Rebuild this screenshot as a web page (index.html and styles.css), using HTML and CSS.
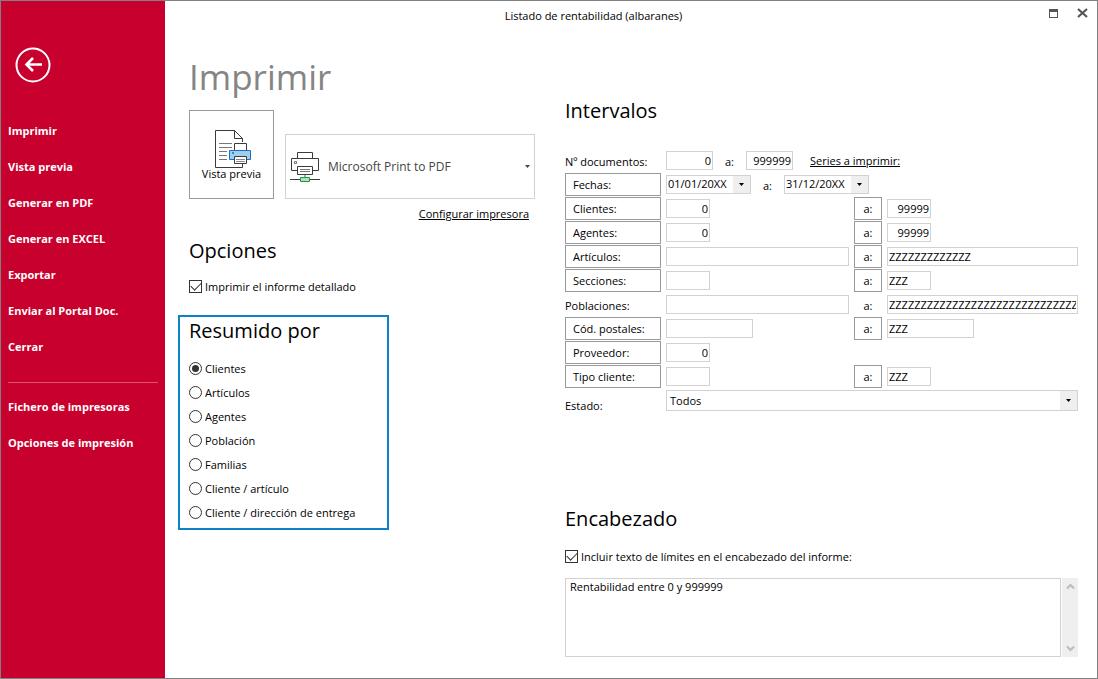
FILE: index.html
```html
<!DOCTYPE html>
<html lang="es">
<head>
<meta charset="utf-8">
<meta name="viewport" content="width=device-width, initial-scale=1">
<title>Listado de rentabilidad (albaranes)</title>
<link rel="stylesheet" href="styles.css">
</head>
<body>
<div class="window">
  <nav class="sidebar">
    <button class="back" type="button" aria-label="Volver">
      <svg width="36" height="36" viewBox="0 0 36 36" fill="none" stroke="#fff" stroke-width="2"><circle cx="18" cy="18" r="16.5"/><path d="M27 17.500H11M18 11l-6.500 6.500L18 24" stroke-width="2.600"/></svg>
    </button>
    <a class="nav-item" href="#imprimir">Imprimir</a>
    <a class="nav-item" href="#vista">Vista previa</a>
    <a class="nav-item" href="#pdf">Generar en PDF</a>
    <a class="nav-item" href="#excel">Generar en EXCEL</a>
    <a class="nav-item" href="#exportar">Exportar</a>
    <a class="nav-item" href="#portal">Enviar al Portal Doc.</a>
    <a class="nav-item" href="#cerrar">Cerrar</a>
    <hr class="nav-rule">
    <a class="nav-item" href="#fichero">Fichero de impresoras</a>
    <a class="nav-item" href="#opciones">Opciones de impresión</a>
  </nav>

  <div class="body">
    <header class="titlebar">
      <div class="title">Listado de rentabilidad (albaranes)</div>
      <div class="controls">
        <button class="control" type="button" aria-label="Maximizar"><svg width="11" height="11" viewBox="0 0 11 11" shape-rendering="crispEdges"><path d="M1 1h9v9H1zM2 4v5h7V4z" fill="#555" fill-rule="evenodd"/></svg></button>
        <button class="control" type="button" aria-label="Cerrar ventana"><svg width="11" height="11" viewBox="0 0 11 11"><path d="M1 1l9 8M10 1l-9 8" stroke="#555" stroke-width="2.200"/></svg></button>
      </div>
    </header>

    <main class="content">
      <section class="left">
        <h1>Imprimir</h1>
        <div class="print-row">
          <button class="preview" type="button">
            <svg width="39" height="38" viewBox="-2 1 39 38" fill="none" stroke="#3b3b3b">
              <path d="M28.500 13v-3.500l-8-8H1.500v37h27v-5" fill="#fff"/>
              <path d="M20.500 1.500v8h8z" fill="#fff"/>
              <path d="M5 14.500h13M5 18.500h13M5 22.500h8M5 26.500h8M5 30.500h8" stroke="#777"/>
              <path d="M20.500 21.500v-7h12v7" fill="#fff"/>
              <path d="M15.500 21.500h21v9h-21z" fill="#a0cdf2" stroke="#1c6fb8"/>
              <path d="M18.500 23.500h1v1h-1z" stroke="#1c6fb8"/>
              <path d="M20.500 27.500h12v7h-12z" fill="#fff"/>
              <path d="M22 30.500h9M22 32.500h9" stroke="#888"/>
            </svg>
            <span>Vista previa</span>
          </button>
          <div class="printer">
            <select class="printer-select" aria-label="Impresora"><option>Microsoft Print to PDF</option></select>
            <svg class="printer-icon" width="30" height="32" viewBox="0 0 30 32" fill="none" stroke="#3b3b3b">
              <path d="M7.500 7.500v-6h15v6" fill="#fff"/>
              <path d="M1.500 7.500h27v12h-27z" fill="#fff"/>
              <path d="M4.500 10.500h2v2h-2z" stroke="#777"/>
              <path d="M15 23v3" stroke="#aaa" stroke-width="2"/>
              <path d="M7.500 15.500h15v8h-15z" fill="#fff"/>
              <path d="M10 18.500h10M10 20.500h10" stroke="#777"/>
              <path d="M0 28.500h30"/>
              <path d="M10.500 26.500h9v4h-9z" fill="#b5e0bf" stroke="#1c9a45"/>
            </svg>
            <svg class="caret" width="5" height="3" viewBox="0 0 5 3"><path d="M0 0h5L2.500 3z" fill="#444"/></svg>
          </div>
        </div>
        <a class="config" href="#configurar">Configurar impresora</a>

        <h2>Opciones</h2>
        <label class="check"><input type="checkbox" checked>Imprimir el informe detallado</label>

        <div class="summary" role="radiogroup" aria-labelledby="resumido">
          <h2 id="resumido">Resumido por</h2>
          <label class="radio"><input type="radio" name="resumen" checked>Clientes</label>
          <label class="radio"><input type="radio" name="resumen">Artículos</label>
          <label class="radio"><input type="radio" name="resumen">Agentes</label>
          <label class="radio"><input type="radio" name="resumen">Población</label>
          <label class="radio"><input type="radio" name="resumen">Familias</label>
          <label class="radio"><input type="radio" name="resumen">Cliente / artículo</label>
          <label class="radio"><input type="radio" name="resumen">Cliente / dirección de entrega</label>
        </div>
      </section>

      <section class="right">
        <h2>Intervalos</h2>
        <div class="ranges">
          <label class="text-label" for="doc1">Nº documentos:</label>
          <div class="inline-fields">
            <input class="field short num" id="doc1" value="0">
            <label class="text-label" for="doc2">a:</label>
            <input class="field short num" id="doc2" value="999999">
            <a class="series" href="#series">Series a imprimir:</a>
          </div>

          <button class="lookup" type="button">Fechas:</button>
          <div class="inline-fields">
            <div class="combo date">
              <select aria-label="Fecha inicial"><option>01/01/20XX</option></select>
              <span class="drop"><svg width="5" height="3" viewBox="0 0 5 3"><path d="M0 0h5L2.500 3z"/></svg></span>
            </div>
            <label class="text-label" for="fecha2">a:</label>
            <div class="combo date">
              <select id="fecha2"><option>31/12/20XX</option></select>
              <span class="drop"><svg width="5" height="3" viewBox="0 0 5 3"><path d="M0 0h5L2.500 3z"/></svg></span>
            </div>
          </div>

          <button class="lookup" type="button">Clientes:</button>
          <input class="field small num" aria-label="Clientes desde" value="0">
          <button class="lookup to" type="button">a:</button>
          <input class="field small num" aria-label="Clientes hasta" value="99999">

          <button class="lookup" type="button">Agentes:</button>
          <input class="field small num" aria-label="Agentes desde" value="0">
          <button class="lookup to" type="button">a:</button>
          <input class="field small num" aria-label="Agentes hasta" value="99999">

          <button class="lookup" type="button">Artículos:</button>
          <input class="field" aria-label="Artículos desde">
          <button class="lookup to" type="button">a:</button>
          <input class="field" aria-label="Artículos hasta" value="ZZZZZZZZZZZZZ">

          <button class="lookup" type="button">Secciones:</button>
          <input class="field small" aria-label="Secciones desde">
          <button class="lookup to" type="button">a:</button>
          <input class="field small" aria-label="Secciones hasta" value="ZZZ">

          <label class="text-label" for="pob1">Poblaciones:</label>
          <input class="field" id="pob1">
          <label class="text-label to-label" for="pob2">a:</label>
          <input class="field" id="pob2" value="ZZZZZZZZZZZZZZZZZZZZZZZZZZZZZZZ">

          <button class="lookup" type="button">Cód. postales:</button>
          <input class="field medium" aria-label="Códigos postales desde">
          <button class="lookup to" type="button">a:</button>
          <input class="field medium" aria-label="Códigos postales hasta" value="ZZZ">

          <button class="lookup" type="button">Proveedor:</button>
          <input class="field small num row-end" aria-label="Proveedor" value="0">

          <button class="lookup" type="button">Tipo cliente:</button>
          <input class="field small" aria-label="Tipo cliente desde">
          <button class="lookup to" type="button">a:</button>
          <input class="field small" aria-label="Tipo cliente hasta" value="ZZZ">

          <label class="text-label low" for="estado">Estado:</label>
          <div class="combo row-end">
            <select id="estado"><option>Todos</option></select>
            <span class="drop"><svg width="5" height="3" viewBox="0 0 5 3"><path d="M0 0h5L2.500 3z"/></svg></span>
          </div>
        </div>

        <h2 class="heading-title">Encabezado</h2>
        <label class="check limits"><input type="checkbox" checked>Incluir texto de límites en el encabezado del informe:</label>
        <div class="memo">
          <textarea aria-label="Texto de encabezado">Rentabilidad entre 0 y 999999</textarea>
          <div class="scrollbar">
            <svg width="9" height="7" viewBox="0 0 9 7" fill="none" stroke="#bcbcbc" stroke-width="2"><path d="M1 5.500L4.500 2L8 5.500"/></svg>
            <svg width="9" height="7" viewBox="0 0 9 7" fill="none" stroke="#bcbcbc" stroke-width="2"><path d="M1 1.500L4.500 5L8 1.500"/></svg>
          </div>
        </div>
      </section>
    </main>
  </div>
</div>
</body>
</html>
```

FILE: styles.css
```css
* { box-sizing: border-box; }

body {
  margin: 0;
  background: #fff;
  color: #000;
  font: 11px/16px "Open Sans", "Noto Sans", sans-serif;
}

button, input, select, textarea {
  margin: 0;
  border-radius: 0;
  color: inherit;
  font: inherit;
}

svg { display: block; flex: none; }
a { color: inherit; }

.window {
  display: flex;
  min-height: 100vh;
  border: 1px solid #808080;
}

/* Sidebar */
.sidebar {
  display: flex;
  flex: none;
  flex-direction: column;
  width: 164px;
  padding: 46px 7px 0;
  background: #c8002d;
  color: #fff;
}

.back {
  align-self: flex-start;
  margin: 0 0 30px 7px;
  padding: 0;
  border: 0;
  background: none;
}

.nav-item {
  font-size: 11px;
  font-weight: 700;
  line-height: 36px;
  text-decoration: none;
}

.nav-rule {
  width: 100%;
  margin: 17px 0 6px;
  border: 0;
  border-top: 1px solid #dc5270;
}

/* Title bar */
.body { flex: 1; min-width: 0; }

.titlebar { display: flex; height: 30px; }

.title {
  flex: 1;
  line-height: 30px;
  text-align: center;
}

.controls {
  display: flex;
  justify-content: flex-end;
  gap: 18px;
  width: 75px;
  padding: 6px 9px;
}

.control {
  height: 12px;
  padding: 0;
  border: 0;
  background: none;
}

/* Content */
.content {
  display: grid;
  grid-template-columns: 346px 1fr;
  gap: 30px;
  padding: 22px 19px 20px 24px;
}

h1, h2 { margin: 0; font-weight: 400; }
h1 { color: #858585; font-size: 35px; line-height: 48px; }
h2 { font-size: 20px; line-height: 28px; }

.left { display: flex; flex-direction: column; }

.print-row {
  display: flex;
  align-items: flex-end;
  gap: 11px;
  margin-top: 9px;
}

.preview {
  display: flex;
  flex-direction: column;
  align-items: center;
  justify-content: center;
  width: 85px;
  height: 89px;
  padding: 3px 0 0;
  border: 1px solid #9a9a9a;
  background: #fff;
}

.preview svg { margin-bottom: -2px; }

.printer {
  display: grid;
  flex: 1;
  align-items: center;
  height: 65px;
}

.printer > * { grid-area: 1 / 1; }

.printer-select {
  width: 100%;
  height: 100%;
  padding: 0 20px 0 42px;
  border: 1px solid #d2d2d2;
  background: #fff;
  color: #444;
  font-size: 12px;
  appearance: none;
}

.printer-icon, .caret { pointer-events: none; }
.printer-icon { margin-left: 5px; }
.caret { justify-self: end; margin-right: 5px; }

.config {
  align-self: flex-end;
  margin: 7px 6px 15px 0;
}

.check, .radio {
  display: flex;
  align-items: center;
  gap: 3px;
}

.check { margin-top: 14px; }
.check.limits { margin-top: 16px; }
.radio { height: 24px; }

input[type="checkbox"], input[type="radio"] {
  display: grid;
  place-content: center;
  width: 13px;
  height: 13px;
  margin-bottom: 1px;
  border: 1px solid #333;
  background: #fff;
  appearance: none;
}

input[type="radio"] { border-radius: 50%; }

input[type="radio"]:checked::before {
  width: 7px;
  height: 7px;
  border-radius: 50%;
  background: #333;
  content: "";
}

input[type="checkbox"]:checked::before {
  width: 9px;
  height: 5px;
  margin-bottom: 3px;
  border: solid #333;
  border-width: 0 0 1px 1px;
  content: "";
  transform: rotate(-45deg);
}

.summary {
  width: 211px;
  margin: 20px 0 0 -11px;
  padding: 0 9px 3px;
  border: 2px solid #0a84c6;
}

.summary h2 { margin-bottom: 12px; }

/* Ranges */
.right { min-width: 0; padding-top: 44px; }

.ranges {
  display: grid;
  grid-template-columns: 96px 183px 28px 1fr;
  grid-auto-rows: 23px;
  align-items: center;
  gap: 1px 5px;
  margin-top: 24px;
}

.text-label { padding-top: 3px; }
.text-label.low { padding-top: 10px; }
.to-label { text-align: center; }

.lookup {
  height: 23px;
  padding: 0 7px;
  border: 1px solid #999;
  background: #fff;
  text-align: left;
}

.lookup.to { padding: 0; text-align: center; }

.inline-fields {
  display: flex;
  grid-column: 2 / -1;
  align-items: center;
  gap: 12px;
}

.row-end { grid-column: 2 / -1; }

.field {
  width: 100%;
  min-width: 0;
  height: 19px;
  padding: 0 1px 1px;
  border: 1px solid #d2d2d2;
  background: #fff;
}

.field.small { width: 44px; }
.field.short { width: 47px; }
.field.medium { width: 87px; }
.num { text-align: right; }
.series { margin-left: 5px; }

.combo { display: grid; height: 21px; }
.combo > * { grid-area: 1 / 1; }

.combo select {
  width: 100%;
  padding: 1px 18px 0 3px;
  border: 1px solid #d2d2d2;
  background: #fff;
  appearance: none;
}

.combo.date { width: 85px; height: 19px; }
.combo.date select { padding: 0 18px 1px 1px; }

.drop {
  display: grid;
  place-content: center;
  justify-self: end;
  width: 17px;
  margin: 1px;
  background: #efefef;
  pointer-events: none;
}

/* Header text */
.heading-title { margin-top: 93px; }

.memo {
  display: flex;
  gap: 1px;
  height: 79px;
  margin-top: 13px;
}

textarea {
  flex: 1;
  min-width: 0;
  padding: 0 4px;
  border: 1px solid #d2d2d2;
  background: #fff;
  resize: none;
}

.scrollbar {
  display: flex;
  flex-direction: column;
  align-items: center;
  justify-content: space-between;
  width: 16px;
  padding: 5px 0;
  background: #efefef;
}
```
